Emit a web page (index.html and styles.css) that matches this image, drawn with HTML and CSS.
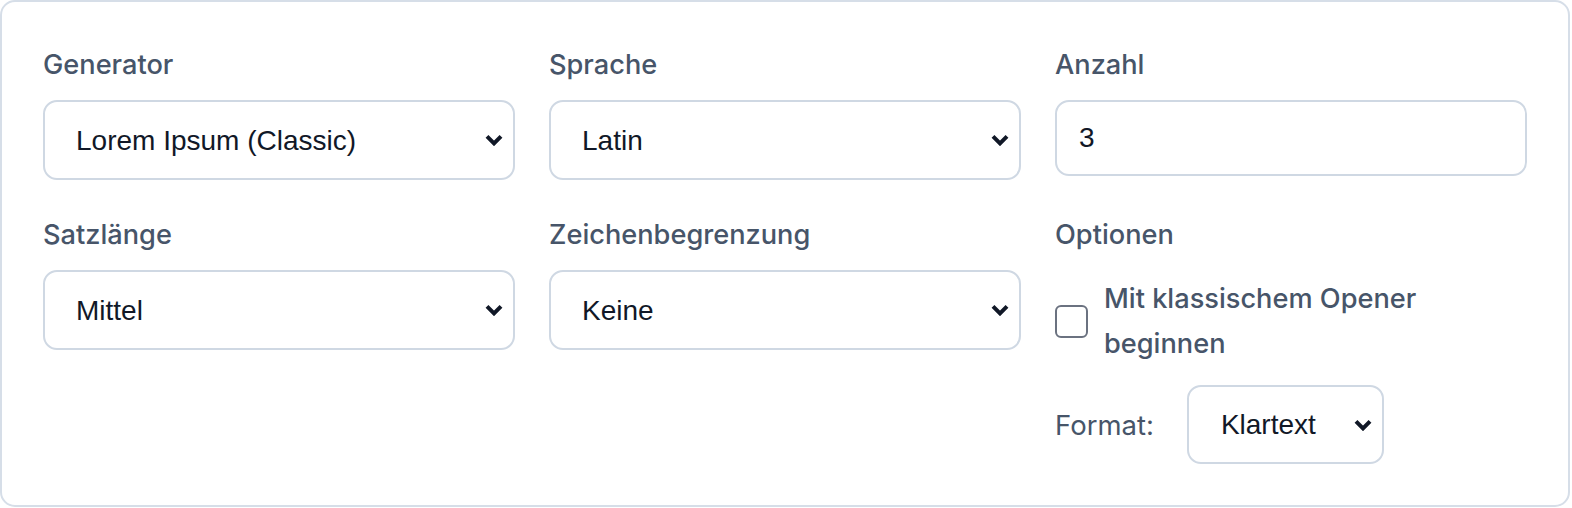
FILE: index.html
```html
<!DOCTYPE html>
<html lang="de">
<head>
<meta charset="utf-8">
<title>Generator-Einstellungen</title>
<link rel="stylesheet" href="styles.css">
</head>
<body>
<form class="panel">
  <div class="field">
    <label class="field-label" for="gen">Generator</label>
    <select id="gen" class="control select">
      <option>Lorem Ipsum (Classic)</option>
    </select>
  </div>
  <div class="field">
    <label class="field-label" for="lang">Sprache</label>
    <select id="lang" class="control select">
      <option>Latin</option>
    </select>
  </div>
  <div class="field">
    <label class="field-label" for="count">Anzahl</label>
    <input id="count" class="control input" type="text" value="3">
  </div>
  <div class="field">
    <label class="field-label" for="len">Satzlänge</label>
    <select id="len" class="control select">
      <option>Mittel</option>
    </select>
  </div>
  <div class="field">
    <label class="field-label" for="limit">Zeichenbegrenzung</label>
    <select id="limit" class="control select">
      <option>Keine</option>
    </select>
  </div>
  <div class="field">
    <span class="field-label">Optionen</span>
    <label class="check">
      <input type="checkbox" class="check-box">
      <span class="check-text">Mit klassischem Opener beginnen</span>
    </label>
    <div class="format-row">
      <label class="format-label" for="fmt">Format:</label>
      <select id="fmt" class="control select select-small">
        <option>Klartext</option>
      </select>
    </div>
  </div>
</form>
</body>
</html>
```

FILE: styles.css
```css
html, body {
  margin: 0;
  padding: 0;
  background: #ffffff;
}

body {
  font-family: "Inter", "Noto Sans", sans-serif;
}

.panel {
  box-sizing: border-box;
  width: 1570px;
  margin: 0;
  padding: 45px 41px 41px 41px;
  border: 2px solid #d6dee8;
  border-radius: 15px;
  background: #ffffff;
  display: grid;
  grid-template-columns: repeat(3, 1fr);
  column-gap: 34px;
  row-gap: 37px;
  align-items: start;
}

.field {
  display: flex;
  flex-direction: column;
  min-width: 0;
}

.field-label {
  font-size: 27.2px;
  font-weight: 500;
  line-height: 36px;
  color: #475569;
  margin-bottom: 17px;
}

.control {
  box-sizing: border-box;
  width: 100%;
  margin: 0;
  border: 2px solid #cfd8e3;
  border-radius: 14px;
  background-color: #ffffff;
  font-family: "Liberation Sans", Arial, sans-serif;
  font-size: 28px;
  color: #111827;
  outline: none;
}

/* native-looking select with a bold chevron on the right */
.select {
  height: 80px;
  padding: 0 40px 0 31px;
  -webkit-appearance: none;
  appearance: none;
  background-image: url("data:image/svg+xml,%3Csvg xmlns='http://www.w3.org/2000/svg' width='18' height='12' viewBox='0 0 18 12'%3E%3Cpath d='M2 2.4 L9 9.4 L16 2.4' fill='none' stroke='%23111827' stroke-width='4' stroke-linejoin='miter'/%3E%3C/svg%3E");
  background-repeat: no-repeat;
  background-position: right 10px center;
  background-size: 18px 12px;
}

.input {
  height: 76px;
  padding: 0 22px;
}

.check {
  display: flex;
  align-items: center;
  gap: 16px;
  margin-top: 6px;
}

.check-box {
  -webkit-appearance: none;
  appearance: none;
  box-sizing: border-box;
  flex: none;
  width: 33px;
  height: 33px;
  margin: 0;
  border: 2px solid #6b7280;
  border-radius: 6px;
  background: #ffffff;
}

.check-text {
  font-size: 27.2px;
  font-weight: 500;
  line-height: 45px;
  color: #475569;
  padding-right: 60px;
}

.format-row {
  display: flex;
  align-items: center;
  gap: 33px;
  margin-top: 19px;
}

.format-label {
  font-size: 27.5px;
  font-weight: 400;
  color: #475569;
}

.select-small {
  width: 197px;
  height: 79px;
  padding-left: 32px;
}
```
